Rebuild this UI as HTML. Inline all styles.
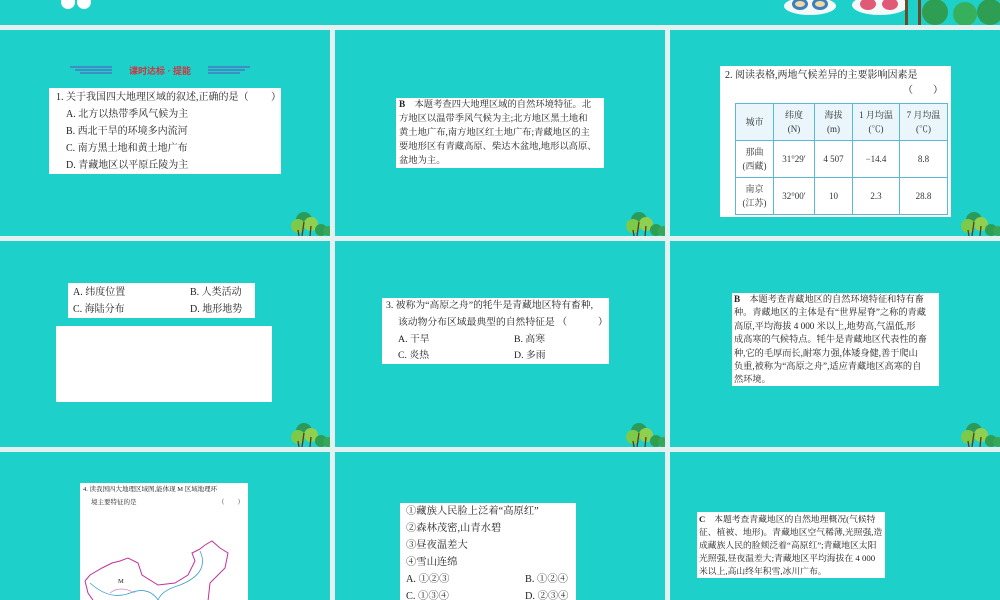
<!DOCTYPE html>
<html><head><meta charset="utf-8"><style>
*{margin:0;padding:0;box-sizing:border-box}
body{width:1000px;height:600px;overflow:hidden;background:#e3f1f0;position:relative;font-family:"Liberation Serif","Noto Serif CJK SC",serif;color:#222}
.p{position:absolute;background:#1dd0ca;overflow:hidden}
.b{position:absolute;background:#fff;white-space:nowrap;overflow:hidden}
.tree{position:absolute;width:40px;height:26px}
table{border-collapse:collapse;position:absolute;font-size:9px;text-align:center;color:#333}
td{border:1px solid #5ab9d6;line-height:14px;padding:0}
tr.h td{background:#eaf6fb}
</style></head><body>
<div class="p" style="left:0;top:0;width:1000px;height:25px"></div>
<svg style="position:absolute;left:0;top:0" width="1000" height="25">
<ellipse cx="68" cy="2" rx="7" ry="7" fill="#fff"/><ellipse cx="84" cy="2" rx="7" ry="7" fill="#fff"/>
<ellipse cx="810" cy="6" rx="26" ry="9" fill="#f4f8f8"/><ellipse cx="800" cy="4" rx="8" ry="6" fill="#3b7fc0"/><ellipse cx="820" cy="4" rx="8" ry="6" fill="#3b7fc0"/>
<ellipse cx="800" cy="4" rx="5" ry="3" fill="#f3d9a0"/><ellipse cx="820" cy="4" rx="5" ry="3" fill="#f3d9a0"/>
<ellipse cx="880" cy="5" rx="28" ry="10" fill="#f4f8f8"/><ellipse cx="868" cy="4" rx="8" ry="6" fill="#e05a78"/><ellipse cx="890" cy="4" rx="8" ry="6" fill="#e05a78"/>
<rect x="905" y="0" width="3" height="25" fill="#6a4b2a"/><rect x="918" y="0" width="3" height="25" fill="#6a4b2a"/>
<circle cx="935" cy="12" r="13" fill="#2e9f52"/><circle cx="965" cy="14" r="12" fill="#37b05c"/><circle cx="990" cy="12" r="13" fill="#2e9f52"/>
</svg>

<div class="p" style="left:0;top:30px;width:330px;height:206px"></div>
<div class="p" style="left:335px;top:30px;width:330px;height:206px"></div>
<div class="p" style="left:670px;top:30px;width:330px;height:206px"></div>
<div class="p" style="left:0;top:241px;width:330px;height:206px"></div>
<div class="p" style="left:335px;top:241px;width:330px;height:206px"></div>
<div class="p" style="left:670px;top:241px;width:330px;height:206px"></div>
<div class="p" style="left:0;top:452px;width:330px;height:148px"></div>
<div class="p" style="left:335px;top:452px;width:330px;height:148px"></div>
<div class="p" style="left:670px;top:452px;width:330px;height:148px"></div>

<svg width="0" height="0" style="position:absolute"><defs><g id="tr">
<circle cx="14" cy="10" r="8" fill="#2a9b58"/><circle cx="8" cy="16" r="7" fill="#7dc94a"/><circle cx="21" cy="14" r="7" fill="#8fd050"/><circle cx="31" cy="20" r="6" fill="#2e9f52"/><circle cx="38" cy="21" r="5" fill="#37a85a"/>
<path d="M12 26 L14 12 M20 26 L21 16 M9 26 L8 20" stroke="#5a3b1e" stroke-width="1.3"/></g></defs></svg>
<svg class="tree" style="left:290px;top:210px" viewBox="0 0 40 26"><use href="#tr"/></svg>
<svg class="tree" style="left:625px;top:210px" viewBox="0 0 40 26"><use href="#tr"/></svg>
<svg class="tree" style="left:960px;top:210px" viewBox="0 0 40 26"><use href="#tr"/></svg>
<svg class="tree" style="left:290px;top:421px" viewBox="0 0 40 26"><use href="#tr"/></svg>
<svg class="tree" style="left:625px;top:421px" viewBox="0 0 40 26"><use href="#tr"/></svg>
<svg class="tree" style="left:960px;top:421px" viewBox="0 0 40 26"><use href="#tr"/></svg>

<svg style="position:absolute;left:70px;top:64px" width="180" height="12">
<g stroke="#5a4bbf" stroke-width="1"><line x1="0" y1="3" x2="42" y2="3"/><line x1="5" y1="6" x2="42" y2="6"/><line x1="10" y1="9" x2="42" y2="9"/>
<line x1="138" y1="3" x2="180" y2="3"/><line x1="138" y1="6" x2="175" y2="6"/><line x1="138" y1="9" x2="170" y2="9"/></g>
<text x="90" y="10" text-anchor="middle" font-size="9" font-weight="bold" fill="#d0343f" font-family="Liberation Sans,Noto Sans CJK SC,sans-serif">课时达标 · 提能</text></svg>
<div class="b" style="left:49px;top:88px;width:232px;height:86px;font-size:10px;line-height:17px;padding:1px 0 0 7px">
1. 关于我国四大地理区域的叙述,正确的是（<span style="position:absolute;left:222px">）</span><br>
<span style="padding-left:10px">A. 北方以热带季风气候为主</span><br>
<span style="padding-left:10px">B. 西北干旱的环境多内流河</span><br>
<span style="padding-left:10px">C. 南方黑土地和黄土地广布</span><br>
<span style="padding-left:10px">D. 青藏地区以平原丘陵为主</span></div>

<div class="b" style="left:396px;top:98px;width:208px;height:70px;font-size:9.3px;line-height:14px;padding:0 0 0 3px">
<b>B</b>　本题考查四大地理区域的自然环境特征。北<br>方地区以温带季风气候为主;北方地区黑土地和<br>黄土地广布,南方地区红土地广布;青藏地区的主<br>要地形区有青藏高原、柴达木盆地,地形以高原、<br>盆地为主。</div>

<div class="b" style="left:720px;top:66px;width:231px;height:151px;font-size:10px;line-height:15px;padding:2px 0 0 5px">
2. 阅读表格,两地气候差异的主要影响因素是<br><span style="padding-left:178px">（　　）</span></div>
<table style="left:735px;top:103px;width:213px;height:111px">
<tr class="h" style="height:37px"><td style="width:38px">城市</td><td style="width:41px">纬度<br>(N)</td><td style="width:38px">海拔<br>(m)</td><td style="width:47px">1 月均温<br>(℃)</td><td>7 月均温<br>(℃)</td></tr>
<tr style="height:37px"><td>那曲<br>(西藏)</td><td>31°29′</td><td>4 507</td><td>−14.4</td><td>8.8</td></tr>
<tr style="height:37px"><td>南京<br>(江苏)</td><td>32°00′</td><td>10</td><td>2.3</td><td>28.8</td></tr>
</table>

<div class="b" style="left:68px;top:283px;width:187px;height:35px;font-size:10px;line-height:17px;padding:1px 0 0 5px">
A. 纬度位置<span style="position:absolute;left:122px">B. 人类活动</span><br>C. 海陆分布<span style="position:absolute;left:122px">D. 地形地势</span></div>
<div class="b" style="left:56px;top:326px;width:216px;height:76px"></div>

<div class="b" style="left:382px;top:298px;width:227px;height:66px;font-size:9.8px;line-height:16.8px;padding:0 0 0 4px">
3. 被称为“高原之舟”的牦牛是青藏地区特有畜种,<br><span style="padding-left:12px">该动物分布区域最典型的自然特征是 （</span><span style="position:absolute;left:216px">）</span><br>
<span style="padding-left:12px">A. 干旱</span><span style="position:absolute;left:132px">B. 高寒</span><br>
<span style="padding-left:12px">C. 炎热</span><span style="position:absolute;left:132px">D. 多雨</span></div>

<div class="b" style="left:732px;top:293px;width:207px;height:93px;font-size:9.2px;line-height:13.4px;padding:0 0 0 2px">
<b>B</b>　本题考查青藏地区的自然环境特征和特有畜<br>种。青藏地区的主体是有“世界屋脊”之称的青藏<br>高原,平均海拔 4 000 米以上,地势高,气温低,形<br>成高寒的气候特点。牦牛是青藏地区代表性的畜<br>种,它的毛厚而长,耐寒力强,体矮身健,善于爬山<br>负重,被称为“高原之舟”,适应青藏地区高寒的自<br>然环境。</div>

<div class="b" style="left:80px;top:483px;width:168px;height:117px;font-size:6.5px;line-height:13px;padding:0 0 0 3px">
4. 读我国四大地理区域图,能体现 M 区域地理环<br><span style="padding-left:8px">境主要特征的是</span><span style="position:absolute;left:138px">（　　）</span>
<svg style="position:absolute;left:0;top:30px" width="168" height="90">
<path d="M120 36 L125 32 L132 28 L140 35 L148 40 L145 55 L138 62 L130 70 L128 88 M5 68 L10 62 L22 55 L32 50 L40 48 L48 45 L58 50 L62 62 L78 72 L95 70 L108 62 L115 48 L112 40 L120 36 M5 68 L8 80 L15 90" fill="none" stroke="#c0329a" stroke-width="1"/>
<path d="M10 70 Q30 88 50 80 Q70 72 80 90 M120 38 Q130 60 100 72 Q80 78 78 88 M82 94 Q100 93 115 92" fill="none" stroke="#3a9fc8" stroke-width="0.8"/>
<path d="M30 80 Q40 72 55 80" fill="none" stroke="#c88ac0" stroke-width="0.7"/>
</svg>
<span style="position:absolute;left:38px;top:92px">M</span></div>

<div class="b" style="left:400px;top:503px;width:176px;height:97px;font-size:10.3px;line-height:17px;padding:0 0 0 6px">
①藏族人民脸上泛着“高原红”<br>②森林茂密,山青水碧<br>③昼夜温差大<br>④雪山连绵<br>
A. ①②③<span style="position:absolute;left:125px">B. ①②④</span><br>C. ①③④<span style="position:absolute;left:125px">D. ②③④</span></div>

<div class="b" style="left:697px;top:512px;width:188px;height:66px;font-size:8.8px;line-height:13px;padding:1px 0 0 2px">
<b>C</b>　本题考查青藏地区的自然地理概况(气候特<br>征、植被、地形)。青藏地区空气稀薄,光照强,造<br>成藏族人民的脸颊泛着“高原红”;青藏地区太阳<br>光照强,昼夜温差大;青藏地区平均海拔在 4 000<br>米以上,高山终年积雪,冰川广布。</div>
</body></html>
